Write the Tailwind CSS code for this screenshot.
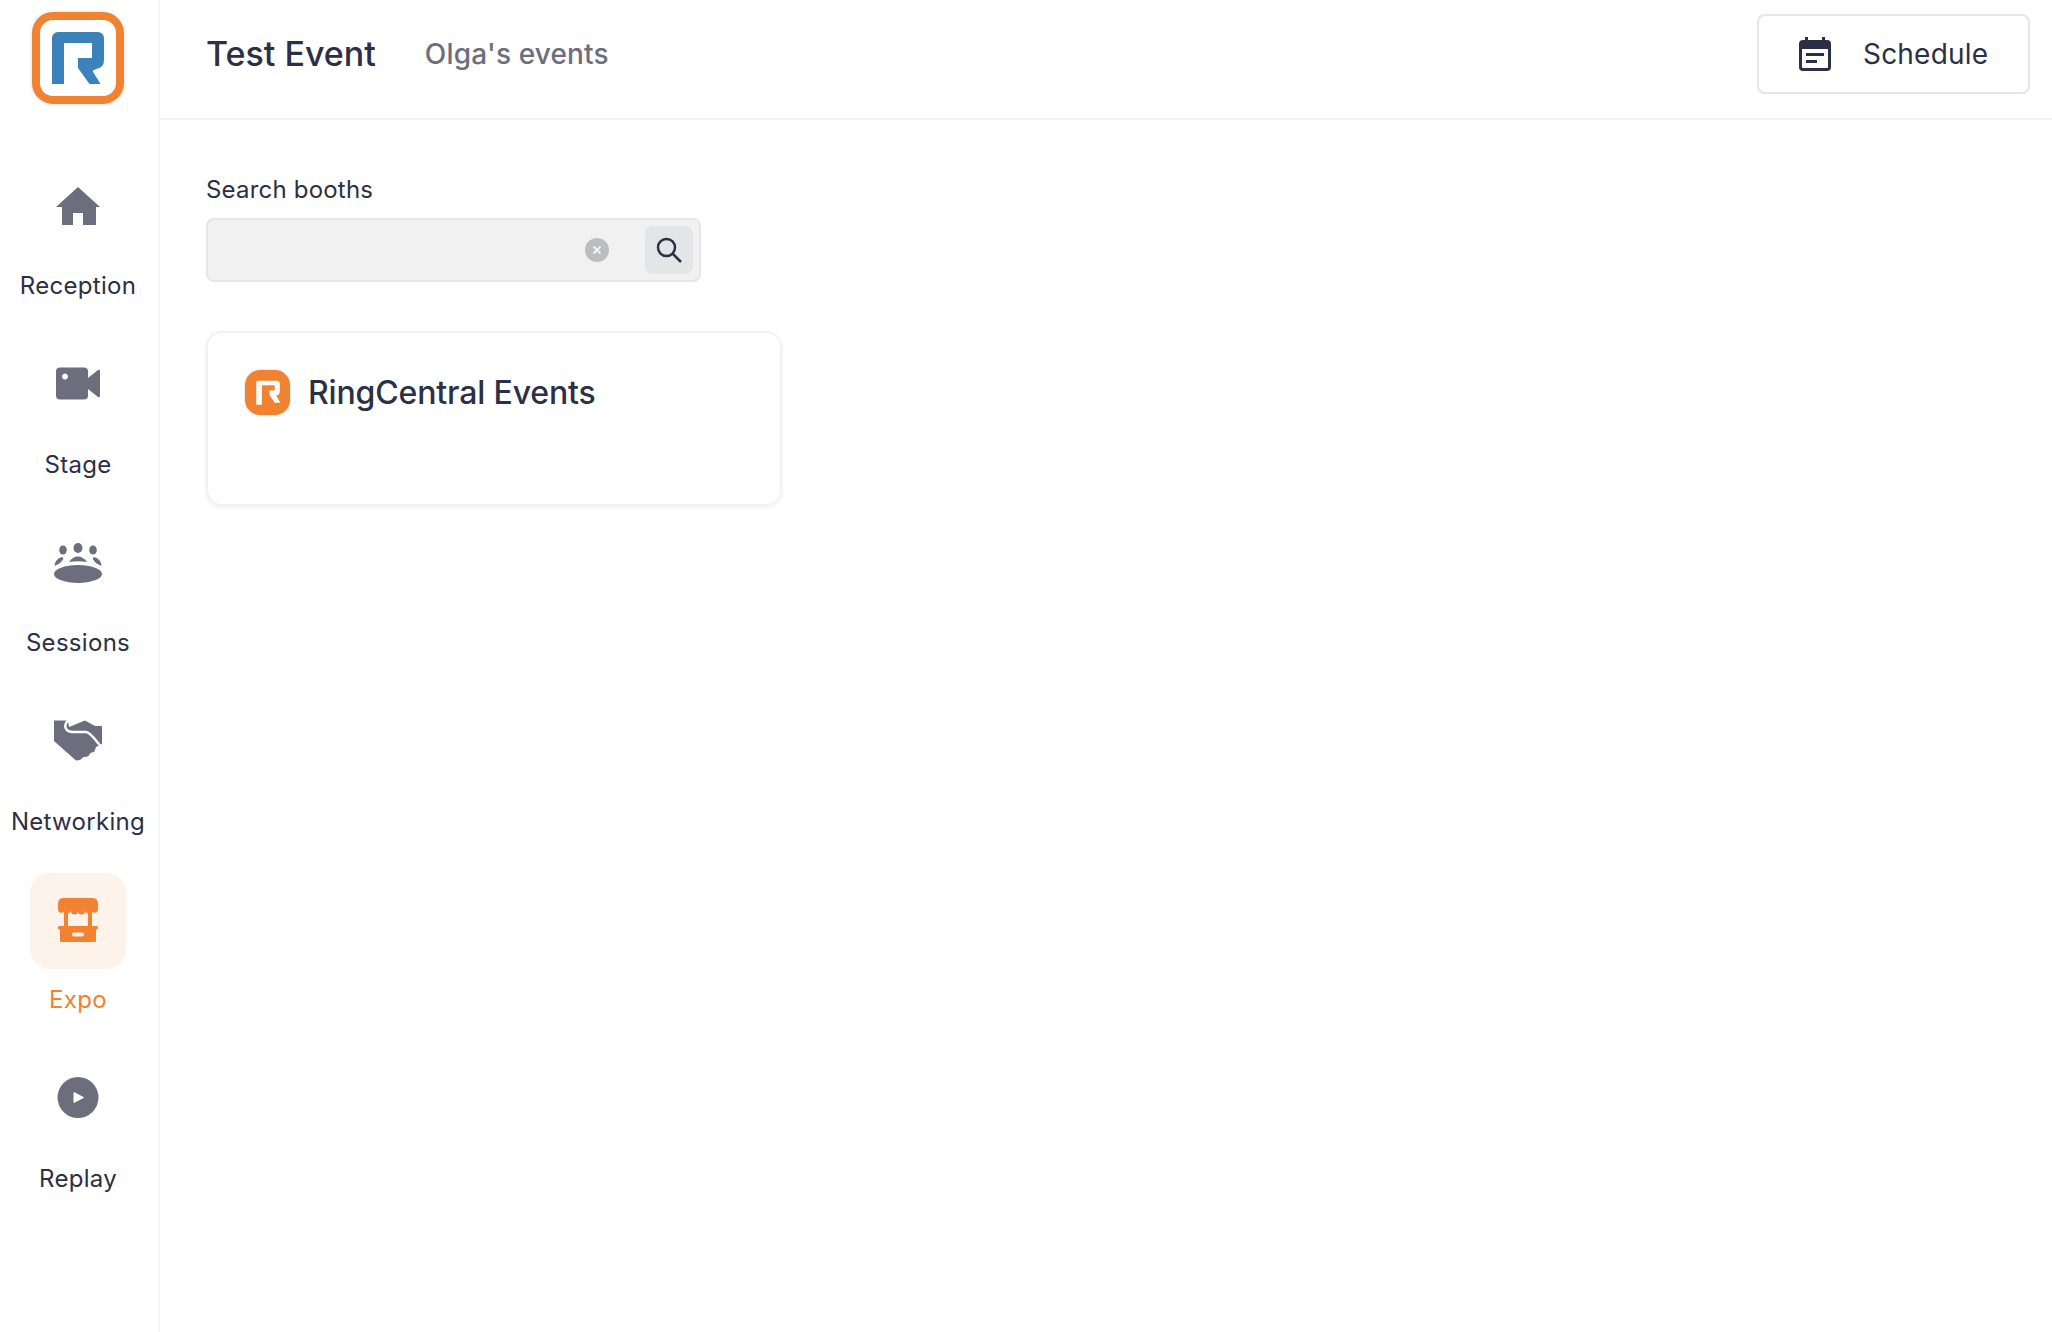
<!DOCTYPE html>
<html lang="en">
<head>
<meta charset="utf-8">
<title>Test Event</title>
<script src="https://cdn.jsdelivr.net/npm/@tailwindcss/browser@4"></script>
</head>
<body class="bg-white font-['Inter',sans-serif] text-[#2b3044]">
<div class="flex h-[1332px] w-[2052px] overflow-hidden">
  <aside class="flex w-[160px] shrink-0 flex-col items-center border-r-2 border-[#f4f4f9] pr-[2px]">
    <div class="h-[158.5px] w-full pl-[32px] pt-[12px]">
      <svg class="drop-shadow-[0_0_2px_rgba(0,0,0,0.12)]" width="92" height="92" viewBox="32 12 92 92">
        <rect x="36" y="16" width="84" height="84" rx="17" fill="#fff" stroke="#f08232" stroke-width="8"/>
        <path d="M52 84V38a6 6 0 0 1 6-6h40a6 6 0 0 1 6 6v22q0 8-8 9l-3.500 2 8 13h-11L78 68V58h14V43H64v41z" fill="#3b82bb"/>
      </svg>
    </div>
    <nav class="flex flex-col items-center">
      <a class="flex h-[178.5px] w-[150px] flex-col items-center">
        <span class="flex h-[96px] w-[96px] rounded-[20px]">
          <svg width="96" height="96" viewBox="0 0 96 96" fill="#6c6e7d"><path d="M48 28 70 48H66V66H53V54H43V66H32V48H26Z"/></svg>
        </span>
        <span class="mt-[13.5px] text-[24px] leading-[36px] tracking-[0.3px]">Reception</span>
      </a>
      <a class="flex h-[178.5px] w-[150px] flex-col items-center">
        <span class="flex h-[96px] w-[96px] rounded-[20px]">
          <svg width="96" height="96" viewBox="0 0 96 96" fill="#6c6e7d"><path fill-rule="evenodd" d="M30 30.500H54a4 4 0 0 1 4 4V58.500a4 4 0 0 1-4 4H30a4 4 0 0 1-4-4V34.500a4 4 0 0 1 4-4ZM35 36.500a3 3 0 1 0 .01 0Z"/><path d="M58 41 68 33q2-1 2 1V59q0 2-2 1L58 52Z"/></svg>
        </span>
        <span class="mt-[13.5px] text-[24px] leading-[36px] tracking-[0.3px]">Stage</span>
      </a>
      <a class="flex h-[178.5px] w-[150px] flex-col items-center">
        <span class="flex h-[96px] w-[96px] rounded-[20px]">
          <svg width="96" height="96" viewBox="0 0 96 96" fill="#6c6e7d">
            <ellipse cx="48" cy="58" rx="24" ry="9"/>
            <ellipse cx="48" cy="32" rx="4.500" ry="5"/><ellipse cx="33" cy="34" rx="3.800" ry="4.500"/><ellipse cx="63" cy="34" rx="3.800" ry="4.500"/>
            <path d="M39 46Q43 40.500 48 40.500T57 46Q48 44.500 39 46Z"/>
            <path d="M24.500 50Q25 43 32 41Q34 42 33 43.500Q30 48 24.500 50Z"/><path d="M71.500 50Q71 43 64 41Q62 42 63 43.500Q66 48 71.500 50Z"/>
          </svg>
        </span>
        <span class="mt-[13.5px] text-[24px] leading-[36px] tracking-[0.3px]">Sessions</span>
      </a>
      <a class="flex h-[178.5px] w-[150px] flex-col items-center">
        <span class="flex h-[96px] w-[96px] rounded-[20px]">
          <svg width="96" height="96" viewBox="0 0 96 96"><path fill="#6c6e7d" d="M24 26.500H38L39 33 55 26.500 65 32H72V50L66 53 64.500 57.500 60.500 59 58 62.500 53.500 63 50 66 46 66.500 24 47Z"/><path fill="none" stroke="#fff" stroke-width="2.500" d="M38.500 26C33 31 35 37.500 42 38H56C61 38.500 65 46 70.500 52"/></svg>
        </span>
        <span class="mt-[13.5px] text-[24px] leading-[36px] tracking-[0.3px]">Networking</span>
      </a>
      <a class="flex h-[178.5px] w-[150px] flex-col items-center">
        <span class="flex h-[96px] w-[96px] rounded-[20px] bg-[#fdf3ea]">
          <svg width="96" height="96" viewBox="0 0 96 96" fill="#f08232">
            <path d="M33 25H63Q68 25 68 31V36.500A3.500 3.500 0 0 1 61.500 38 3.500 3.500 0 0 1 55 38 3.500 3.500 0 0 1 48 38 3.500 3.500 0 0 1 41 38 3.500 3.500 0 0 1 34.500 38 3.500 3.500 0 0 1 28 36.500V31Q28 25 33 25Z"/>
            <rect x="34" y="38" width="4" height="16"/><rect x="58" y="38" width="4" height="16"/>
            <rect x="28" y="53" width="40" height="3.500" rx="1.500"/>
            <path fill-rule="evenodd" d="M30 56H66V67.500Q66 69 64.500 69H31.500Q30 69 30 67.500ZM44 59.500a2 2 0 0 0 0 4H52a2 2 0 0 0 0-4Z"/>
          </svg>
        </span>
        <span class="mt-[13.5px] text-[24px] leading-[36px] tracking-[0.3px] text-[#f08232]">Expo</span>
      </a>
      <a class="flex h-[178.5px] w-[150px] flex-col items-center">
        <span class="flex h-[96px] w-[96px] rounded-[20px]">
          <svg width="96" height="96" viewBox="0 0 96 96"><circle cx="48" cy="46.500" r="20.500" fill="#6c6e7d"/><path d="M44 41.500 53.500 46.500 44 51.500Z" fill="#fff" stroke="#fff" stroke-width="1" stroke-linejoin="round"/></svg>
        </span>
        <span class="mt-[13.5px] text-[24px] leading-[36px] tracking-[0.3px]">Replay</span>
      </a>
    </nav>
  </aside>
  <div class="flex min-w-0 flex-1 flex-col">
    <header class="flex h-[120px] shrink-0 items-center justify-between border-b-2 border-[#f3f3f3] pb-[10px] pl-[46px] pr-[22px]">
      <div class="flex items-center gap-[49px]">
        <h1 class="text-[34px] font-medium leading-[48px]">Test Event</h1>
        <span class="text-[28px] font-medium leading-[40px] tracking-[0.15px] text-[#6c6e7d]">Olga's events</span>
      </div>
      <button class="flex h-[80px] w-[273px] items-center rounded-[8px] border-2 border-[#e6e6e6] pl-[40px]">
        <svg class="mr-[32px]" width="32" height="34" viewBox="0 0 32 34" fill="#2b3044"><path fill-rule="evenodd" d="M6 0h3v3h14V0h3v3h2a4 4 0 0 1 4 4v23a4 4 0 0 1-4 4H4a4 4 0 0 1-4-4V7a4 4 0 0 1 4-4h2zM3 12v18a1 1 0 0 0 1 1h24a1 1 0 0 0 1-1V12z"/><rect x="7" y="16" width="18" height="3"/><rect x="7" y="23" width="11" height="3"/></svg>
        <span class="text-[28px] leading-[40px] tracking-[0.2px]">Schedule</span>
      </button>
    </header>
    <main class="pl-[46px] pt-[52px]">
      <label class="block text-[24px] leading-[36px] tracking-[0.2px]">Search booths</label>
      <div class="mt-[10px] flex h-[64px] w-[495px] items-center justify-end rounded-[8px] border-2 border-[#e6e6e6] bg-[#f1f1f1] pr-[6px]">
        <svg class="mr-[36px]" width="24" height="24" viewBox="0 0 24 24"><circle cx="12" cy="12" r="12" fill="#bcbdc3"/><path d="M8.500 8.500 15.500 15.500M15.500 8.500 8.500 15.500" stroke="#f1f1f1" stroke-width="2"/></svg>
        <span class="flex h-[48px] w-[48px] items-center justify-center rounded-[8px] bg-[#e4e5e7]">
          <svg width="28" height="28" viewBox="0 0 28 28" fill="none" stroke="#2b3044" stroke-width="2.500"><circle cx="11.500" cy="11.500" r="8.500"/><path d="M17.500 17.500 26 26"/></svg>
        </span>
      </div>
      <div class="mt-[49px] flex h-[175px] w-[576px] items-start rounded-[16px] border-2 border-[#f2f2f2] pl-[37px] pt-[37px] shadow-[0_2px_4px_rgba(0,0,0,0.06)]">
        <div class="flex items-center">
          <svg class="mr-[18px] drop-shadow-[0_0_1px_rgba(0,0,0,0.2)]" width="45" height="45" viewBox="0 0 44 44"><rect width="44" height="44" rx="15" fill="#f08232"/><path d="M11 34V12a1.500 1.500 0 0 1 1.500-1.500H31a3 3 0 0 1 3 3V21q0 3-3 4l-.5 0 4 7h-5.500L24 24.500V20h5v-5H16.500V34z" fill="#fff"/></svg>
          <span class="text-[32px] font-medium leading-[44px] tracking-[-0.15px]">RingCentral Events</span>
        </div>
      </div>
    </main>
  </div>
</div>
</body>
</html>
